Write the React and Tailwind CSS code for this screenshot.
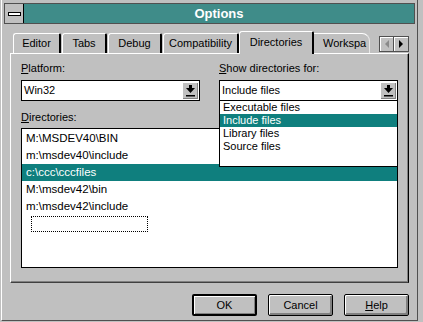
import React from 'react';

const font = "font-['Liberation_Sans',Arial,sans-serif]";

function DropArrow() {
  return (
    <svg width="9" height="12" viewBox="0 0 9 12">
      <rect x="3" y="0" width="3" height="3" fill="#000" />
      <polygon points="0,3 9,3 4.5,8" fill="#000" />
      <rect x="0" y="10" width="9" height="1.5" fill="#000" />
    </svg>
  );
}

function Combo({ value }) {
  return (
    <div className="flex h-[21px] border border-black bg-white">
      <div className="flex-1 pl-[2px] leading-[19px]">{value}</div>
      <div className="w-[16px] m-[1px] flex items-center justify-center bg-[#c0c0c0] shadow-[inset_1px_1px_0_#fff,inset_-1px_-1px_0_#808080]">
        <DropArrow />
      </div>
    </div>
  );
}

function Tab({ label, width }) {
  return (
    <div
      style={{ width }}
      className="h-[20px] border-l border-t border-white rounded-tl-[3px] rounded-tr-[2px] border-r-2 border-r-black flex items-center justify-center"
    >
      {label}
    </div>
  );
}

function Btn({ children, def }) {
  return (
    <button
      className={
        def
          ? 'w-[65px] h-[22px] border-2 border-black rounded-[2px] bg-[#c0c0c0] shadow-[inset_1px_1px_0_#fff,inset_-1px_-1px_0_#808080] text-[11px] leading-none'
          : 'w-[65px] h-[22px] border border-black rounded-[2px] bg-[#c0c0c0] shadow-[inset_1px_1px_0_#fff,inset_-2px_-2px_0_#808080] text-[11px] leading-none'
      }
    >
      {children}
    </button>
  );
}

const dirs = ['M:\\MSDEV40\\BIN', 'm:\\msdev40\\include', 'c:\\ccc\\cccfiles', 'M:\\msdev42\\bin', 'm:\\msdev42\\include'];
const kinds = ['Executable files', 'Include files', 'Library files', 'Source files'];

export default function App() {
  return (
    <div className={`w-[423px] h-[322px] bg-[#c0c0c0] overflow-hidden text-[11px] text-black ${font}`}>
      <div className="ml-[1px] w-[417px] h-[321px] border-l border-white border-r border-b border-r-[#505050] border-b-[#505050] pt-[3px] px-[2px] flex flex-col">
        {/* title bar */}
        <div className="h-[21px] flex border border-[#505050]">
          <div className="w-[19px] border-r border-black flex items-center justify-center bg-[#c0c0c0]">
            <div className="w-[13px] h-[4px] bg-white border border-black" />
          </div>
          <div className="flex-1 bg-[#3f8c89] flex items-center justify-center text-white font-bold text-[13px]">
            Options
          </div>
        </div>

        {/* tabs */}
        <div className="mt-[7px] h-[22px] flex items-end pl-[9px] relative z-10">
          <Tab label="Editor" width={48} />
          <div className="ml-[1px]"><Tab label="Tabs" width={45} /></div>
          <div className="ml-[1px]"><Tab label="Debug" width={54} /></div>
          <div className="ml-[1px]"><Tab label="Compatibility" width={76} /></div>
          <div className="w-[75px] h-[23px] -mb-[1px] bg-[#c0c0c0] border-l border-t border-white rounded-tl-[3px] rounded-tr-[2px] border-r-2 border-r-black flex items-center justify-center pb-[1px]">
            Directories
          </div>
          <div className="w-[56px] h-[20px] border-t border-white border-r border-r-[#e8e8e8] rounded-tr-[8px] flex items-center pl-[9px] whitespace-nowrap">
            Workspa
          </div>
          <div className="ml-[9px] mb-[1px] flex">
            <div className="w-[15px] h-[16px] border border-[#505050] bg-[#c0c0c0] shadow-[inset_1px_1px_0_#fff] flex items-center justify-center">
              <svg width="5" height="8" viewBox="0 0 5 8"><polygon points="5,0 5,8 1,4" fill="#8a8a8a" /></svg>
            </div>
            <div className="w-[15px] h-[16px] border border-l-0 border-[#505050] bg-[#c0c0c0] shadow-[inset_1px_1px_0_#fff] flex items-center justify-center">
              <svg width="5" height="8" viewBox="0 0 5 8"><polygon points="0,0 0,8 4,4" fill="#000" /></svg>
            </div>
          </div>
        </div>

        {/* panel */}
        <div className="ml-[6px] w-[399px] h-[230px] border-l border-t border-white border-r border-b border-r-black border-b-[#404040] shadow-[inset_-1px_-1px_0_#808080] pt-[8px] px-[10px]">
          <div className="flex gap-[19px]">
            <div className="w-[179px]">
              <div className="h-[13px] leading-[13px] mb-[5px]"><span className="underline">P</span>latform:</div>
              <Combo value="Win32" />
            </div>
            <div className="w-[179px] relative">
              <div className="h-[13px] leading-[13px] mb-[5px]"><span className="underline">S</span>how directories for:</div>
              <Combo value="Include files" />
              <div className="absolute left-0 right-0 top-full -mt-[1px] h-[67px] border border-black bg-white z-20">
                {kinds.map((k) => (
                  <div
                    key={k}
                    className={k === 'Include files' ? 'h-[13px] leading-[13px] pl-[3px] bg-[#0f7f7e] text-white' : 'h-[13px] leading-[13px] pl-[3px]'}
                  >
                    {k}
                  </div>
                ))}
              </div>
            </div>
          </div>

          <div className="mt-[10px] h-[13px] leading-[13px] mb-[4px]"><span className="underline">D</span>irectories:</div>
          <div className="w-[377px] h-[140px] border border-black bg-white pt-[1px] text-[11.5px]">
            {dirs.map((d) => (
              <div
                key={d}
                className={d === 'c:\\ccc\\cccfiles' ? 'h-[17px] leading-[17px] pl-[4px] bg-[#0f7f7e] text-white' : 'h-[17px] leading-[17px] pl-[4px]'}
              >
                {d}
              </div>
            ))}
            <div className="h-[17px] pl-[9px] flex items-center">
              <div className="w-[117px] h-[16px] border border-dotted border-black" />
            </div>
          </div>
        </div>

        {/* buttons */}
        <div className="ml-[6px] w-[399px] mt-[11px] flex justify-end gap-[11px]">
          <Btn def>OK</Btn>
          <Btn>Cancel</Btn>
          <Btn><span className="underline">H</span>elp</Btn>
        </div>
      </div>
    </div>
  );
}
